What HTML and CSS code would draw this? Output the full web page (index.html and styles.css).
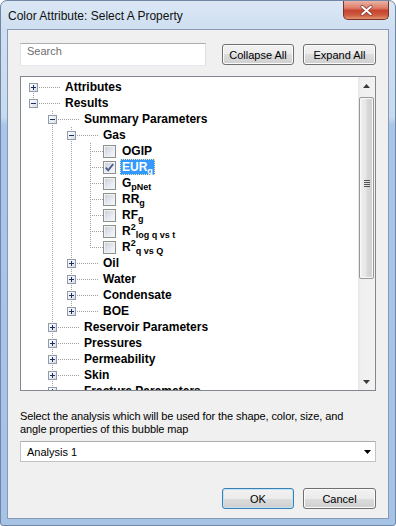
FILE: index.html
```html
<!DOCTYPE html>
<html>
<head>
<meta charset="utf-8">
<link rel="stylesheet" href="styles.css">
</head>
<body>
<div class="window">
  <div class="titlebar">
    <span class="title">Color Attribute: Select A Property</span>
    <div class="close">
      <svg width="46" height="19" viewBox="0 0 46 19">
        <path d="M19 5.5 L28 13.5 M28 5.5 L19 13.5" stroke="#6b2a22" stroke-width="3.6" stroke-linecap="round" fill="none" opacity="0.75"/>
        <path d="M19 5.5 L28 13.5 M28 5.5 L19 13.5" stroke="#ffffff" stroke-width="2" stroke-linecap="round" fill="none"/>
      </svg>
    </div>
  </div>
  <div class="client">
    <div class="toprow">
      <div class="search">Search</div>
      <button class="btn">Collapse All</button>
      <button class="btn gapped">Expand All</button>
    </div>
    <div class="tree">
      <div class="rows">
        <div class="row"><span class="c first"><span class="box plus"></span></span><span class="s"></span><span class="lbl">Attributes</span></div>
        <div class="row"><span class="c last"><span class="box minus"></span></span><span class="s"></span><span class="lbl">Results</span></div>
        <div class="row"><span class="c"></span><span class="c mid"><span class="box minus"></span></span><span class="s"></span><span class="lbl">Summary Parameters</span></div>
        <div class="row"><span class="c"></span><span class="c v"></span><span class="c mid"><span class="box minus"></span></span><span class="s"></span><span class="lbl">Gas</span></div>
        <div class="row"><span class="c"></span><span class="c v"></span><span class="c v"></span><span class="c mid"></span><span class="s k"><span class="chk"></span></span><span class="lbl">OGIP</span></div>
        <div class="row"><span class="c"></span><span class="c v"></span><span class="c v"></span><span class="c mid"></span><span class="s k"><span class="chk"><svg width="11" height="11" viewBox="0 0 11 11"><path d="M1.8 5.6 L4.2 8.3 L9.2 2" fill="none" stroke="#4a5d8c" stroke-width="1.9"/></svg></span></span><span class="lbl sel">EUR<span class="sb">g</span></span></div>
        <div class="row"><span class="c"></span><span class="c v"></span><span class="c v"></span><span class="c mid"></span><span class="s k"><span class="chk"></span></span><span class="lbl">G<span class="sb">pNet</span></span></div>
        <div class="row"><span class="c"></span><span class="c v"></span><span class="c v"></span><span class="c mid"></span><span class="s k"><span class="chk"></span></span><span class="lbl">RR<span class="sb">g</span></span></div>
        <div class="row"><span class="c"></span><span class="c v"></span><span class="c v"></span><span class="c mid"></span><span class="s k"><span class="chk"></span></span><span class="lbl">RF<span class="sb">g</span></span></div>
        <div class="row"><span class="c"></span><span class="c v"></span><span class="c v"></span><span class="c mid"></span><span class="s k"><span class="chk"></span></span><span class="lbl">R<span class="sp">2</span><span class="sb">log q vs t</span></span></div>
        <div class="row"><span class="c"></span><span class="c v"></span><span class="c v"></span><span class="c last"></span><span class="s k"><span class="chk"></span></span><span class="lbl">R<span class="sp">2</span><span class="sb">q vs Q</span></span></div>
        <div class="row"><span class="c"></span><span class="c v"></span><span class="c mid"><span class="box plus"></span></span><span class="s"></span><span class="lbl">Oil</span></div>
        <div class="row"><span class="c"></span><span class="c v"></span><span class="c mid"><span class="box plus"></span></span><span class="s"></span><span class="lbl">Water</span></div>
        <div class="row"><span class="c"></span><span class="c v"></span><span class="c mid"><span class="box plus"></span></span><span class="s"></span><span class="lbl">Condensate</span></div>
        <div class="row"><span class="c"></span><span class="c v"></span><span class="c last"><span class="box plus"></span></span><span class="s"></span><span class="lbl">BOE</span></div>
        <div class="row"><span class="c"></span><span class="c mid"><span class="box plus"></span></span><span class="s"></span><span class="lbl">Reservoir Parameters</span></div>
        <div class="row"><span class="c"></span><span class="c mid"><span class="box plus"></span></span><span class="s"></span><span class="lbl">Pressures</span></div>
        <div class="row"><span class="c"></span><span class="c mid"><span class="box plus"></span></span><span class="s"></span><span class="lbl">Permeability</span></div>
        <div class="row"><span class="c"></span><span class="c mid"><span class="box plus"></span></span><span class="s"></span><span class="lbl">Skin</span></div>
        <div class="row"><span class="c"></span><span class="c mid"><span class="box plus"></span></span><span class="s"></span><span class="lbl">Fracture Parameters</span></div>
      </div>
      <div class="vscroll">
        <div class="sbtn"><svg width="7" height="4" viewBox="0 0 7 4"><path d="M3.5 0 L7 4 L0 4Z" fill="#3a3a3a"/></svg></div>
        <div class="thumb"><span class="grip"></span></div>
        <div class="track"></div>
        <div class="sbtn"><svg width="7" height="4" viewBox="0 0 7 4"><path d="M0 0 L7 0 L3.5 4Z" fill="#3a3a3a"/></svg></div>
      </div>
    </div>
    <p class="hint">Select the analysis which will be used for the shape, color, size, and<br>angle properties of this bubble map</p>
    <div class="combo"><span>Analysis 1</span><svg class="carrow" width="7" height="4" viewBox="0 0 7 4"><path d="M0 0 L7 0 L3.5 4Z" fill="#000"/></svg></div>
    <div class="actions">
      <button class="btn ok">OK</button>
      <button class="btn cancel">Cancel</button>
    </div>
  </div>
</div>
</body>
</html>
```
FILE: styles.css
```css
body {
  margin: 0;
  background: #ffffff;
}

.window {
  width: 396px;
  height: 526px;
  box-sizing: border-box;
  border: 1px solid #6f86a5;
  border-radius: 7px 7px 3px 3px;
  background: linear-gradient(180deg, #dbe7f5 0px, #cfdff1 28px, #c8daef 116px, #a9c6e8 124px, #a6c3e6 100%);
  display: flex;
  flex-direction: column;
  font-family: "Liberation Sans", Arial, sans-serif;
  overflow: hidden;
}

.titlebar {
  height: 28px;
  flex: none;
  display: flex;
  align-items: flex-start;
}

.title {
  margin: 2px 0 0 7px;
  line-height: 26px;
  font-size: 12px;
  color: #111;
}

.close {
  margin-left: auto;
  margin-right: 6px;
  width: 46px;
  height: 19px;
  box-sizing: border-box;
  border: 1px solid #7a3128;
  border-top: none;
  border-radius: 0 0 5px 5px;
  background: linear-gradient(180deg, #eab3a6 0%, #dc7b68 40%, #c7452f 52%, #cd5a40 78%, #e2956f 100%);
  display: flex;
}

.client {
  flex: 1;
  margin: 0 6px 6px;
  border: 1px solid #8799b4;
  background: #f0f0f0;
  padding: 13px 12px 0;
  display: flex;
  flex-direction: column;
}

.toprow {
  height: 23px;
  display: flex;
  align-items: center;
}

.search {
  width: 186px;
  height: 23px;
  box-sizing: border-box;
  border: 1px solid;
  border-color: #abadb3 #dbdfe6 #e3e9ef #e2e3ea;
  background: #fff;
  color: #6d6d6d;
  font-size: 11px;
  line-height: 13px;
  padding: 1px 0 0 6px;
  margin-right: 16px;
}

.btn {
  height: 21px;
  width: 72px;
  box-sizing: border-box;
  border: 1px solid #707070;
  border-radius: 3px;
  background: linear-gradient(180deg, #f2f2f2 0%, #ebebeb 50%, #dddddd 50%, #cfcfcf 100%);
  box-shadow: inset 0 0 0 1px #fbfbfb;
  font-family: "Liberation Sans", Arial, sans-serif;
  font-size: 11px;
  color: #000;
  padding: 0;
}

.gapped {
  width: 73px;
  margin-left: 9px;
}

.tree {
  margin-top: 10px;
  height: 315px;
  box-sizing: border-box;
  border: 1px solid #828790;
  background: #fff;
  display: flex;
}

.rows {
  flex: 1;
  overflow: hidden;
  padding: 2px 0 0 3px;
}

.row {
  height: 16px;
  display: flex;
  align-items: flex-start;
}

.c,
.s {
  flex: none;
  width: 19px;
  height: 16px;
  display: flex;
  align-items: flex-start;
}

.c.v {
  background: repeating-linear-gradient(180deg, #a0a0a0 0 1px, transparent 1px 2px) 9px 0 / 1px 16px no-repeat;
}

.c.mid {
  background:
    repeating-linear-gradient(90deg, #a0a0a0 0 1px, transparent 1px 2px) 9px 8px / 10px 1px no-repeat,
    repeating-linear-gradient(180deg, #a0a0a0 0 1px, transparent 1px 2px) 9px 0 / 1px 16px no-repeat;
}

.c.first {
  background:
    repeating-linear-gradient(90deg, #a0a0a0 0 1px, transparent 1px 2px) 9px 8px / 10px 1px no-repeat,
    repeating-linear-gradient(180deg, #a0a0a0 0 1px, transparent 1px 2px) 9px 8px / 1px 8px no-repeat;
}

.c.last {
  background:
    repeating-linear-gradient(90deg, #a0a0a0 0 1px, transparent 1px 2px) 9px 8px / 10px 1px no-repeat,
    repeating-linear-gradient(180deg, #a0a0a0 0 1px, transparent 1px 2px) 9px 0 / 1px 9px no-repeat;
}

.s {
  background: repeating-linear-gradient(90deg, #a0a0a0 0 1px, transparent 1px 2px) 0 8px / 17px 1px no-repeat;
}

.s.k {
  background: repeating-linear-gradient(90deg, #a0a0a0 0 1px, transparent 1px 2px) 0 8px / 3px 1px no-repeat;
}

.box {
  width: 9px;
  height: 9px;
  box-sizing: border-box;
  margin: 4px 0 0 5px;
  border: 1px solid #8f9bab;
}

.box.plus {
  background:
    linear-gradient(#1d2f66, #1d2f66) 1px 3px / 5px 1px no-repeat,
    linear-gradient(#1d2f66, #1d2f66) 3px 1px / 1px 5px no-repeat,
    linear-gradient(135deg, #ffffff, #d9dee6);
}

.box.minus {
  background:
    linear-gradient(#1d2f66, #1d2f66) 1px 3px / 5px 1px no-repeat,
    linear-gradient(135deg, #ffffff, #d9dee6);
}

.chk {
  width: 13px;
  height: 13px;
  box-sizing: border-box;
  margin: 2px 0 0 3px;
  border: 1px solid #8e8f8f;
  background: linear-gradient(135deg, #c9ced6 0%, #e2e6ec 50%, #fafafa 100%);
  box-shadow: inset 0 0 0 1px #f1f2f4;
  display: flex;
}

.lbl {
  height: 16px;
  line-height: 16px;
  padding: 0 2px;
  margin-left: 1px;
  font-size: 12px;
  font-weight: bold;
  color: #000;
  white-space: nowrap;
}

.lbl.sel {
  background: #3399ff;
  color: #fff;
  outline: 1px dotted #f3e3a8;
  outline-offset: -1px;
}

.sb {
  font-size: 9px;
  vertical-align: -3px;
  line-height: 0;
}

.sp {
  font-size: 9px;
  vertical-align: 5px;
  line-height: 0;
}

.vscroll {
  width: 17px;
  flex: none;
  display: flex;
  flex-direction: column;
  background: linear-gradient(90deg, #e6e6e6 0, #f0f0f0 3px, #f2f2f2 100%);
}

.sbtn {
  height: 17px;
  flex: none;
  display: flex;
  align-items: center;
  justify-content: center;
}

.thumb {
  height: 182px;
  flex: none;
  margin: 3px 1px 0;
  box-sizing: border-box;
  border: 1px solid #979797;
  border-radius: 2px;
  background: linear-gradient(90deg, #f1f1f1 0%, #e6e6e6 45%, #d9d9d9 55%, #d0d0d0 100%);
  box-shadow: inset 0 0 0 1px #f9f9f9;
  display: flex;
  align-items: center;
  justify-content: center;
}

.grip {
  width: 6px;
  height: 7px;
  margin-bottom: 10px;
  background: repeating-linear-gradient(180deg, #555 0 1px, transparent 1px 2px);
}

.track {
  flex: 1;
}

.hint {
  margin: 19px 0 0;
  font-size: 11px;
  line-height: 13px;
  letter-spacing: -0.1px;
  color: #000;
  white-space: nowrap;
}

.combo {
  margin-top: 5px;
  height: 21px;
  box-sizing: border-box;
  border: 1px solid #c3c3c3;
  border-top-color: #abadb3;
  background: #fff;
  display: flex;
  align-items: center;
  padding-left: 6px;
  font-size: 11px;
  color: #000;
}

.carrow {
  margin-left: auto;
  margin-right: 4px;
}

.actions {
  margin-top: 26px;
  display: flex;
  justify-content: flex-end;
}

.ok {
  border-color: #3c7fb1;
  box-shadow: inset 0 0 0 1px #bfe4f8;
}

.cancel {
  width: 73px;
  margin-left: 9px;
}
```
